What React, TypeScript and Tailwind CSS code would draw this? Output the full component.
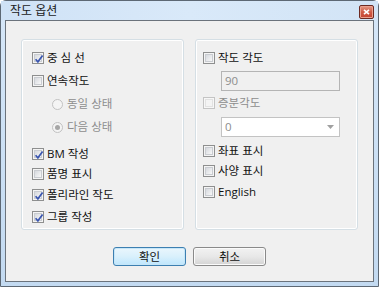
import React from "react";

function Check({ checked = false, disabled = false }: { checked?: boolean; disabled?: boolean }) {
  return (
    <span
      className={
        disabled
          ? "relative flex h-[12px] w-[12px] shrink-0 items-center justify-center border border-[#c4c4c4] bg-[#f7f7f7]"
          : "relative flex h-[12px] w-[12px] shrink-0 items-center justify-center border border-[#8e8f8f] bg-[#f4f4f4]"
      }
    >
      <span
        className={
          disabled
            ? "h-[8px] w-[8px] border border-[#e2e2e2] bg-[#f4f4f4]"
            : "h-[8px] w-[8px] border border-[#c9ccd1] bg-gradient-to-br from-[#d6d9de] to-[#f8f8f8]"
        }
      />
      {checked && (
        <svg className="absolute left-[1px] top-[1px]" width="10" height="10" viewBox="0 0 10 10">
          <path d="M1.6 5.2 L3.9 7.8 L8.6 1.6" fill="none" stroke="#3a56b0" strokeWidth="1.7" />
        </svg>
      )}
    </span>
  );
}

function Radio({ selected = false }: { selected?: boolean }) {
  return (
    <span className="flex h-[11px] w-[11px] shrink-0 items-center justify-center rounded-full border border-[#c2c2c2] bg-[#f4f4f4]">
      {selected && <span className="h-[5px] w-[5px] rounded-full bg-[#a6a6a6]" />}
    </span>
  );
}

function CheckRow({
  label,
  checked,
  disabled,
  className = "",
}: {
  label: string;
  checked?: boolean;
  disabled?: boolean;
  className?: string;
}) {
  return (
    <div className={"flex h-[20px] items-center gap-[3px] " + className}>
      <Check checked={checked} disabled={disabled} />
      <span className={disabled ? "text-[#8d8d8d]" : "text-[#111]"}>{label}</span>
    </div>
  );
}

function RadioRow({ label, selected, className = "" }: { label: string; selected?: boolean; className?: string }) {
  return (
    <div className={"ml-[20px] flex h-[20px] items-center gap-[4px] " + className}>
      <Radio selected={selected} />
      <span className="text-[#8d8d8d]">{label}</span>
    </div>
  );
}

function Button({ label, focused = false }: { label: string; focused?: boolean }) {
  return (
    <div
      className={
        focused
          ? "flex h-[19px] w-[73px] items-center justify-center rounded-[3px] border border-[#3c7fb1] bg-gradient-to-b from-[#eaf6fd] via-[#d9f0fc] to-[#bee6fd] text-[#111] shadow-[inset_0_0_0_1px_#c6e6f8]"
          : "flex h-[19px] w-[73px] items-center justify-center rounded-[3px] border border-[#8a8a8a] bg-gradient-to-b from-[#f2f2f2] via-[#e8e8e8] to-[#d4d4d4] text-[#111] shadow-[inset_0_0_0_1px_#fbfbfb]"
      }
    >
      {label}
    </div>
  );
}

export default function App() {
  return (
    <div className="h-[287px] w-[379px] bg-white font-['Open_Sans','Noto_Sans_CJK_KR',sans-serif] text-[11.5px] leading-none">
      <div className="flex h-[287px] w-[379px] flex-col rounded-t-[6px] border border-[#5d6874] bg-gradient-to-b from-[#d6e7f8] to-[#c3daf1]">
        {/* title bar */}
        <div className="flex h-[19px] items-center justify-between bg-gradient-to-r from-[#cfe2f6] via-[#d9e9f9] to-[#d2e4f6] pl-[9px] pr-[4px]">
          <span className="text-[12px] text-[#1a1a1a]">작도 옵션</span>
          <div className="mt-[2px] flex h-[14px] w-[15px] items-center justify-center rounded-[2px] border border-[#6d2a22] bg-gradient-to-b from-[#e49a86] via-[#cf5a46] to-[#c5432f] shadow-[inset_0_0_0_1px_#eaa08f]">
            <svg width="7" height="6" viewBox="0 0 7 6">
              <path d="M1 0.8 L6 5.2 M6 0.8 L1 5.2" stroke="#ffffff" strokeWidth="1.6" />
            </svg>
          </div>
        </div>
        {/* content */}
        <div className="mx-[4px] flex h-[262px] flex-col border border-[#6b737c] bg-[#f0f0f0]">
          <div className="flex gap-[11px] pl-[15px] pt-[18px]">
            {/* left group */}
            <div className="flex h-[191px] w-[163px] flex-col rounded-[3px] border border-[#d5dfe5] pl-[10px] pt-[8px] shadow-[inset_0_0_0_1px_#ffffff]">
              <CheckRow label="중 심 선" checked />
              <CheckRow label="연속작도" className="mt-[3px]" />
              <RadioRow label="동일 상태" className="mt-[3px]" />
              <RadioRow label="다음 상태" selected className="mt-[3px]" />
              <CheckRow label="BM 작성" checked className="mt-[7px]" />
              <CheckRow label="품명 표시" />
              <CheckRow label="폴리라인 작도" checked className="mt-[1px]" />
              <CheckRow label="그룹 작성" checked className="mt-[2px]" />
            </div>
            {/* right group */}
            <div className="flex h-[191px] w-[163px] flex-col rounded-[3px] border border-[#d5dfe5] pl-[7px] pt-[8px] shadow-[inset_0_0_0_1px_#ffffff]">
              <CheckRow label="작도 각도" />
              <div className="ml-[18px] mt-[3px] flex h-[20px] w-[119px] items-center border border-[#b4b4b4] bg-[#f0f0f0] pl-[3px] text-[#8d8d8d]">
                90
              </div>
              <CheckRow label="증분각도" disabled className="mt-[2px]" />
              <div className="ml-[18px] mt-[4px] flex h-[20px] w-[119px] items-center justify-between border border-[#c3c3c3] bg-white pl-[3px] pr-[5px] text-[#8d8d8d]">
                <span>0</span>
                <svg width="7" height="4" viewBox="0 0 7 4">
                  <path d="M0 0 L7 0 L3.5 4 Z" fill="#a0a0a0" />
                </svg>
              </div>
              <CheckRow label="좌표 표시" className="mt-[4px]" />
              <CheckRow label="사양 표시" />
              <CheckRow label="English" className="mt-[1px]" />
            </div>
          </div>
          <div className="mt-[17px] flex gap-[7px] pl-[107px]">
            <Button label="확인" focused />
            <Button label="취소" />
          </div>
        </div>
      </div>
    </div>
  );
}
